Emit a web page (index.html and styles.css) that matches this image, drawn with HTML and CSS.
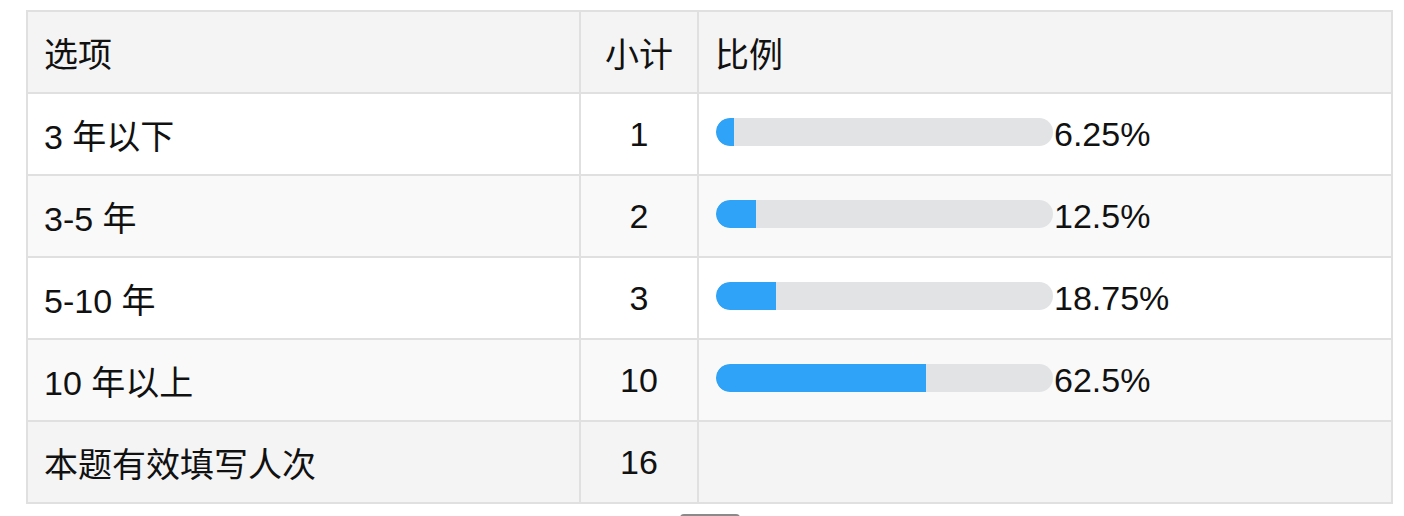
FILE: index.html
```html
<!DOCTYPE html>
<html lang="zh-CN">
<head>
<meta charset="utf-8">
<title>统计</title>
<link rel="stylesheet" href="styles.css">
</head>
<body>
<div class="page">
  <div class="grid">
    <div class="cell head">选项</div>
    <div class="cell head center">小计</div>
    <div class="cell head">比例</div>

    <div class="cell">3 年以下</div>
    <div class="cell center">1</div>
    <div class="cell"><div class="bar"><div class="fill" style="width:18px"></div></div><span class="pct">6.25%</span></div>

    <div class="cell alt">3-5 年</div>
    <div class="cell alt center">2</div>
    <div class="cell alt"><div class="bar"><div class="fill" style="width:40px"></div></div><span class="pct">12.5%</span></div>

    <div class="cell">5-10 年</div>
    <div class="cell center">3</div>
    <div class="cell"><div class="bar"><div class="fill" style="width:60px"></div></div><span class="pct">18.75%</span></div>

    <div class="cell alt">10 年以上</div>
    <div class="cell alt center">10</div>
    <div class="cell alt"><div class="bar"><div class="fill" style="width:210px"></div></div><span class="pct">62.5%</span></div>

    <div class="cell foot">本题有效填写人次</div>
    <div class="cell foot center">16</div>
    <div class="cell foot"></div>
  </div>
  <div class="actions"><div class="btn"></div></div>
</div>
</body>
</html>
```
FILE: styles.css
```css
html, body {
  margin: 0;
  padding: 0;
  background: #ffffff;
}
body {
  font-family: "Liberation Sans", Arial, "Noto Sans CJK SC", sans-serif;
  color: #111111;
  overflow: hidden;
}
.page {
  padding: 10px 0 0 26px;
  width: 1367px;
}
.grid {
  display: grid;
  grid-template-columns: 551px 116px 692px;
  grid-auto-rows: 80px;
  gap: 2px;
  padding: 2px;
  background: #e0e0e0;
}
.cell {
  display: flex;
  align-items: center;
  padding: 0 16px;
  font-size: 34px;
  background: #ffffff;
  white-space: nowrap;
}
.cell.center {
  justify-content: center;
  padding: 0;
}
.cell.head,
.cell.foot {
  background: #f4f4f4;
}
.cell.alt {
  background: #f9f9f9;
}
.bar {
  width: 337px;
  height: 28px;
  margin-left: 1px;
  margin-top: -4px;
  border-radius: 14px;
  background: #e2e3e5;
  overflow: hidden;
  flex: none;
}
.fill {
  height: 100%;
  background: #2ea3f7;
  border-radius: 14px 0 0 14px;
}
.pct {
  margin-left: 1px;
}
.actions {
  display: flex;
  justify-content: center;
  padding-top: 10px;
}
.btn {
  width: 60px;
  height: 2px;
  border-top: 2px solid #8a8a8a;
  border-radius: 4px 4px 0 0;
}
```
